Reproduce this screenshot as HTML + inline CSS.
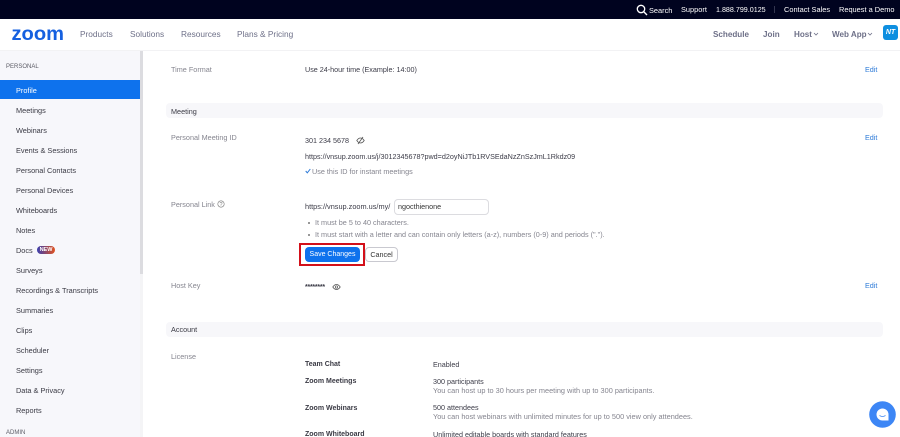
<!DOCTYPE html>
<html><head><meta charset="utf-8"><style>
html,body{margin:0;padding:0;background:#fff;width:900px;height:437px;overflow:hidden}
body{position:relative;font-family:"Liberation Sans",sans-serif;font-size:7.2px;color:#3c3c48;filter:blur(.3px)}
.t{position:absolute;white-space:nowrap;line-height:12px;margin-top:1px}
.abs{position:absolute}
.g{color:#85858f;font-size:7.25px}.d{color:#34343e}.b{color:#2e7bd8}
.l{font-size:7.35px}
.n{color:#6e7088;font-size:8.3px;font-weight:400}
.r{font-weight:700;font-size:8.1px}
.w{color:#fff;font-size:7.4px}
.s{color:#3a3a44;font-size:7.35px;left:16px}
.h{color:#5c5c66;font-size:6px}
.bar{position:absolute;left:166px;width:717px;height:15px;background:#f7f7fa;border-radius:4px}
.bd{font-weight:700;color:#3a3a44;font-size:7px}
.e{left:865px;color:#2e7bd8}
</style></head><body>
<div class="abs" style="left:0;top:0;width:900px;height:19px;background:#00031f"></div>
<div class="abs" style="left:0;top:19px;width:900px;height:31px;background:#fff;border-bottom:1px solid #f2f2f4"></div>
<svg class="abs" style="left:636px;top:4px" width="12" height="12" viewBox="0 0 12 12"><circle cx="5" cy="5" r="3.7" fill="none" stroke="#fff" stroke-width="1.3"/><path d="M7.8 7.8L11 11" stroke="#fff" stroke-width="1.4"/></svg>
<div class="t w" style="left:649px;top:4px">Search</div>
<div class="t w" style="left:681px;top:3px">Support</div>
<div class="t w" style="left:716px;top:3px;font-size:7.15px">1.888.799.0125</div>
<div class="abs" style="left:774px;top:6px;width:1px;height:7px;background:#33364f"></div>
<div class="t w" style="left:784px;top:3px">Contact Sales</div>
<div class="t w" style="left:839px;top:3px">Request a Demo</div>
<svg class="abs" style="left:11px;top:26px" width="54" height="16" viewBox="0 0 54 16"><text x="0.5" y="14" font-family="Liberation Sans" font-weight="700" font-size="19" fill="#1560e0" textLength="52.5" lengthAdjust="spacingAndGlyphs">zoom</text></svg>
<div class="t n" style="left:80px;top:27px">Products</div>
<div class="t n" style="left:130px;top:27px">Solutions</div>
<div class="t n" style="left:181px;top:27px">Resources</div>
<div class="t n" style="left:237px;top:27px">Plans &amp; Pricing</div>
<div class="t n r" style="left:713px;top:28px">Schedule</div>
<div class="t n r" style="left:763px;top:28px">Join</div>
<div class="t n r" style="left:794px;top:28px">Host</div>
<svg class="abs" style="left:813px;top:32px" width="6" height="5"><path d="M1 1l2 2 2-2" fill="none" stroke="#6e7088" stroke-width=".8"/></svg>
<div class="t n r" style="left:832px;top:28px">Web App</div>
<svg class="abs" style="left:867px;top:32px" width="6" height="5"><path d="M1 1l2 2 2-2" fill="none" stroke="#6e7088" stroke-width=".8"/></svg>
<div class="abs" style="left:883px;top:25px;width:15px;height:15px;background:#0e8fe0;border-radius:3px;color:#fff;font-size:7px;font-weight:700;font-style:italic;text-align:center;line-height:15px">NT</div>

<div class="abs" style="left:0;top:51px;width:140px;height:386px;background:#f7f7fb"></div>
<div class="abs" style="left:140px;top:51px;width:3px;height:386px;background:#f4f4f6"></div>
<div class="abs" style="left:140px;top:51px;width:3px;height:223px;background:#dcdce0"></div>
<div class="t h" style="left:6px;top:60px">PERSONAL</div>
<div class="abs" style="left:0;top:80px;width:140px;height:19px;background:#0e72ed"></div>
<div class="t" style="left:16px;top:84px;color:#fff;font-size:7.35px">Profile</div>
<div class="t s" style="top:104px">Meetings</div>
<div class="t s" style="top:124px">Webinars</div>
<div class="t s" style="top:144px">Events &amp; Sessions</div>
<div class="t s" style="top:164px">Personal Contacts</div>
<div class="t s" style="top:184px">Personal Devices</div>
<div class="t s" style="top:204px">Whiteboards</div>
<div class="t s" style="top:224px">Notes</div>
<div class="t s" style="top:244px">Docs</div>
<div class="abs" style="left:37px;top:246px;width:18px;height:8px;border-radius:4px;background:linear-gradient(90deg,#3a3fb0,#e2531f);color:#fff;font-size:5.5px;font-weight:700;line-height:8px;text-align:center">NEW</div>
<div class="t s" style="top:264px">Surveys</div>
<div class="t s" style="top:284px">Recordings &amp; Transcripts</div>
<div class="t s" style="top:304px">Summaries</div>
<div class="t s" style="top:324px">Clips</div>
<div class="t s" style="top:344px">Scheduler</div>
<div class="t s" style="top:364px">Settings</div>
<div class="t s" style="top:384px">Data &amp; Privacy</div>
<div class="t s" style="top:404px">Reports</div>
<div class="t h" style="left:6px;top:426px">ADMIN</div>

<div class="t g" style="left:171px;top:63px">Time Format</div>
<div class="t" style="left:305px;top:63px">Use 24-hour time (Example: 14:00)</div>
<div class="t e" style="top:63px">Edit</div>
<div class="bar" style="top:103px"></div>
<div class="t bd" style="left:171px;top:105px;font-weight:400;font-size:7.25px">Meeting</div>
<div class="t g" style="left:171px;top:131px">Personal Meeting ID</div>
<div class="t" style="left:305px;top:134px">301 234 5678</div>
<svg class="abs" style="left:356px;top:136px" width="9" height="9" viewBox="0 0 9 9"><path d="M.8 4.5C2 2.7 3.2 2 4.5 2s2.5.7 3.7 2.5C7 6.3 5.8 7 4.5 7S2 6.3.8 4.5z" fill="none" stroke="#555" stroke-width=".8"/><path d="M7 1L2 8" stroke="#555" stroke-width=".8"/></svg>
<div class="t e" style="top:131px">Edit</div>
<div class="t" style="left:305px;top:150px">https://vnsup.zoom.us/j/3012345678?pwd=d2oyNiJTb1RVSEdaNzZnSzJmL1Rkdz09</div>
<svg class="abs" style="left:305px;top:168px" width="6" height="6" viewBox="0 0 6 6"><path d="M.7 3l1.6 1.8L5.3 1" fill="none" stroke="#2e7bd8" stroke-width="1"/></svg>
<div class="t g" style="left:312px;top:165px">Use this ID for instant meetings</div>
<div class="t g" style="left:171px;top:198px">Personal Link</div>
<svg class="abs" style="left:217px;top:200px" width="8" height="8" viewBox="0 0 8 8"><circle cx="4" cy="4" r="3.2" fill="none" stroke="#777" stroke-width=".6"/><text x="4" y="6" font-size="5.5" text-anchor="middle" fill="#777" font-family="Liberation Sans">?</text></svg>
<div class="t l" style="left:305px;top:200px">https://vnsup.zoom.us/my/</div>
<div class="abs t" style="left:394px;top:198px;width:90px;height:14px;border:1px solid #dcdce0;border-radius:4px;padding-left:3px;line-height:14px;color:#333">ngocthienone</div>
<div class="abs" style="left:308px;top:222px;width:2px;height:2px;border-radius:50%;background:#777"></div>
<div class="t g" style="left:315px;top:216px">It must be 5 to 40 characters.</div>
<div class="abs" style="left:308px;top:234px;width:2px;height:2px;border-radius:50%;background:#777"></div>
<div class="t g" style="left:315px;top:228px">It must start with a letter and can contain only letters (a-z), numbers (0-9) and periods (".").</div>
<div class="abs" style="left:299px;top:243px;width:62px;height:19px;border:2px solid #d3101a;background:#fff"></div>
<div class="abs" style="left:305px;top:247px;width:55px;height:15px;background:#0e72ed;border-radius:4px;color:#fff;font-size:7px;text-align:center;line-height:16px">Save Changes</div>
<div class="abs" style="left:365px;top:247px;width:31px;height:13px;border:1px solid #c9c9d0;border-radius:4px;color:#333;text-align:center;line-height:13px">Cancel</div>
<div class="t g" style="left:171px;top:279px">Host Key</div>
<div class="t" style="left:305px;top:281px;font-weight:700;font-size:7px;letter-spacing:-.25px">********</div>
<svg class="abs" style="left:332px;top:283px" width="9" height="8" viewBox="0 0 9 8"><path d="M.8 4C2 2.2 3.2 1.5 4.5 1.5S7 2.2 8.2 4C7 5.8 5.8 6.5 4.5 6.5S2 5.8.8 4z" fill="none" stroke="#555" stroke-width=".8"/><circle cx="4.5" cy="4" r="1.2" fill="none" stroke="#555" stroke-width=".7"/></svg>
<div class="t e" style="top:279px">Edit</div>
<div class="bar" style="top:322px"></div>
<div class="t bd" style="left:171px;top:323px;font-weight:400;font-size:7.25px">Account</div>
<div class="t g" style="left:171px;top:350px">License</div>
<div class="t bd" style="left:305px;top:358px">Team Chat</div>
<div class="t" style="left:433px;top:358px">Enabled</div>
<div class="t bd" style="left:305px;top:375px">Zoom Meetings</div>
<div class="t" style="left:433px;top:375px">300 participants</div>
<div class="t g l" style="left:433px;top:384px">You can host up to 30 hours per meeting with up to 300 participants.</div>
<div class="t bd" style="left:305px;top:402px">Zoom Webinars</div>
<div class="t" style="left:433px;top:401px">500 attendees</div>
<div class="t g l" style="left:433px;top:410px">You can host webinars with unlimited minutes for up to 500 view only attendees.</div>
<div class="t bd" style="left:305px;top:428px">Zoom Whiteboard</div>
<div class="t" style="left:433px;top:428px">Unlimited editable boards with standard features</div>
<svg class="abs" style="left:869px;top:401px" width="27" height="27" viewBox="0 0 27 27"><circle cx="13.5" cy="13.5" r="13.3" fill="#3d86f5"/><path d="M13.5 7.5a6 6 0 0 0 0 12h6v-6a6 6 0 0 0-6-6z" fill="#fff"/><path d="M10.5 14.5q3 2 6 0" fill="none" stroke="#3d86f5" stroke-width=".8"/></svg>
</body></html>
